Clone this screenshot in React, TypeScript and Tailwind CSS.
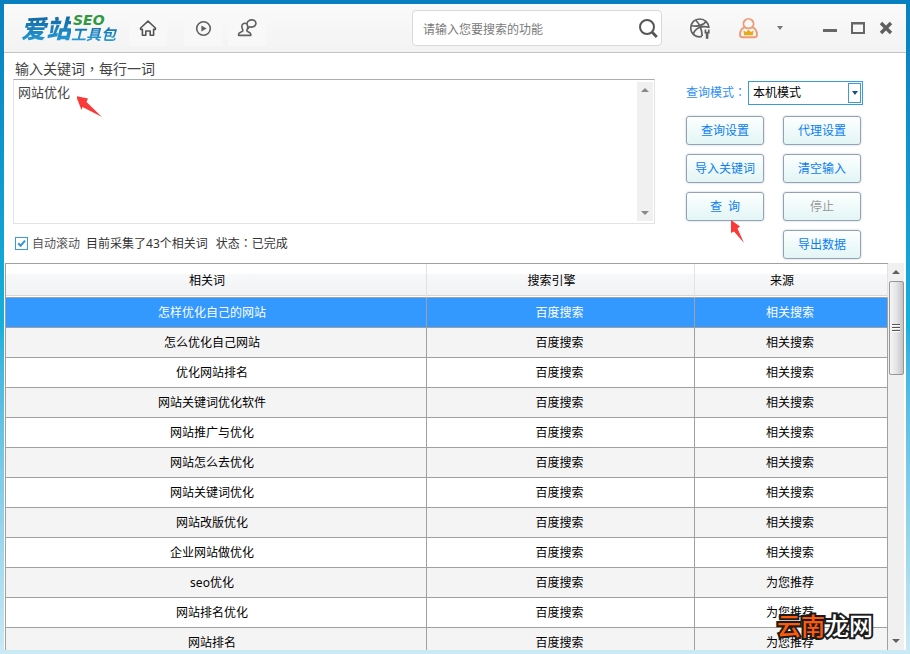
import { useState } from 'react';

const rowsData = [
  { word: '怎样优化自己的网站', engine: '百度搜索', source: '相关搜索' },
  { word: '怎么优化自己网站', engine: '百度搜索', source: '相关搜索' },
  { word: '优化网站排名', engine: '百度搜索', source: '相关搜索' },
  { word: '网站关键词优化软件', engine: '百度搜索', source: '相关搜索' },
  { word: '网站推广与优化', engine: '百度搜索', source: '相关搜索' },
  { word: '网站怎么去优化', engine: '百度搜索', source: '相关搜索' },
  { word: '网站关键词优化', engine: '百度搜索', source: '相关搜索' },
  { word: '网站改版优化', engine: '百度搜索', source: '相关搜索' },
  { word: '企业网站做优化', engine: '百度搜索', source: '相关搜索' },
  { word: 'seo优化', engine: '百度搜索', source: '为您推荐' },
  { word: '网站排名优化', engine: '百度搜索', source: '为您推荐' },
  { word: '网站排名', engine: '百度搜索', source: '为您推荐' },
];

const actions = [
  { label: '查询设置' },
  { label: '代理设置' },
  { label: '导入关键词' },
  { label: '清空输入' },
  { label: '查\u00a0\u00a0询', arrow: true },
  { label: '停止', disabled: true },
  { label: '导出数据', last: true },
];

const Logo = () => (
  <div className="flex w-24 shrink-0 items-center font-black whitespace-nowrap italic">
    <span className="shrink-0 bg-linear-to-b from-[#0c5f9e] to-[#2a9fd8] bg-clip-text text-[25px] leading-8 text-transparent">
      爱站
    </span>
    <span className="flex shrink-0 flex-col">
      <span className="pl-0.5 font-['DejaVu_Sans',sans-serif] text-sm leading-3 font-bold text-[#2f9a41]">SEO</span>
      <span className="bg-linear-to-b from-[#0c6bab] to-[#2a9fd8] bg-clip-text pr-1 text-[15px] leading-4 font-bold text-transparent">
        工具包
      </span>
    </span>
  </div>
);

// full-width punctuation centred in its box
const Mark = ({ children }: { children: string }) => (
  <span className="font-['Noto_Sans_CJK_TC',sans-serif] leading-none">{children}</span>
);

const HomeIcon = () => (
  <svg className="h-5 w-5" viewBox="0 0 20 20" fill="none" stroke="#555" strokeWidth="1.6" strokeLinejoin="round">
    <path d="M2.6 10 L10 3.2 L17.4 10 V11.4 H15.6 V17.2 H12.2 V13 H7.8 V17.2 H4.4 V11.4 H2.6 Z" />
  </svg>
);

const PlayIcon = () => (
  <svg className="h-5 w-5" viewBox="0 0 20 20" fill="none" stroke="#606060" strokeWidth="1.6">
    <circle cx="10.5" cy="10.5" r="6.8" />
    <path d="M8.4 7.6 L13.6 10.5 L8.4 13.4 Z" fill="#606060" stroke="none" />
  </svg>
);

const ChatUserIcon = () => (
  <svg className="h-5 w-5" viewBox="0 0 20 20" fill="none" stroke="#606060" strokeWidth="1.6" strokeLinejoin="round">
    <path d="M9.8 5.8 C8 4.6 4.8 5.4 4.8 8.6 C4.8 10.4 5.8 11.4 6 12.6 C5.6 14 1.8 14 1.6 16.2 V17.4 H13.8 V16.2 C13.6 14 9.9 14 9.8 12.6 C10.2 11.6 10.6 10.9 10.6 9.4" />
    <path d="M10.8 10.8 V8.2 C9.6 6.4 9.8 4 11.6 2.8 C13.6 1.4 16.8 1.6 18.2 3.2 C19.6 5 18.8 7.8 16.8 8.6 C15.2 9.3 13.6 9.2 12.6 8.8 Z" />
  </svg>
);

const SearchIcon = () => (
  <svg className="h-5 w-5" viewBox="0 0 20 20" fill="none" stroke="#555">
    <circle cx="9" cy="9" r="7" strokeWidth="2" />
    <path d="M14.2 14.2 L18.8 19" strokeWidth="2.8" />
  </svg>
);

const BallIcon = () => (
  <svg className="h-[22px] w-[22px]" viewBox="0 0 22 22" fill="none" stroke="#606060" strokeWidth="1.7">
    <path d="M13 19.4 C7 21 1.8 17 1.8 11 C1.8 5.6 5.8 2 10.8 2 C15.8 2 19.8 6 20 11" />
    <path d="M2 8.2 C7 10.4 14.6 8.6 17 4.4" />
    <path d="M6.6 3 C10.6 7 13 12.4 13.2 19" />
    <path d="M4.4 17 C6 11.4 12.5 8.4 19.6 10.2" />
    <path d="M16.4 12.6 V15.6 H19.8 V12.6" strokeWidth="1.7" />
    <path d="M18.1 15.4 V21.8" strokeWidth="2.6" />
  </svg>
);

const AvatarIcon = () => (
  <svg className="h-[22px] w-[22px]" viewBox="0 0 22 22" fill="none" stroke="#ef9a76" strokeWidth="1.9">
    <path d="M7.8 10.2 A5 5 0 1 1 15.2 10.2 C18.2 11.4 19.8 14.2 20 17.4 C20 19.4 19.2 20.2 17.6 20.2 H5.4 C3.8 20.2 3 19.4 3 17.4 C3.2 14.2 4.8 11.4 7.8 10.2 Z" />
    <path d="M7.8 10.2 C9.6 11.7 13.4 11.7 15.2 10.2" />
    <path d="M6.4 13.4 L9.2 15 L11.5 12.4 L13.8 15 L16.6 13.4 L15.8 18.2 H7.2 Z" fill="#e8ab17" stroke="none" />
  </svg>
);

const Triangle = ({ up = false, className = 'w-2 text-[#606060]' }: { up?: boolean; className?: string }) => (
  <svg className={`h-1 ${className}`} viewBox="0 0 8 4" preserveAspectRatio="none" fill="currentColor">
    <path d={up ? 'M0 4 L4 0 L8 4 Z' : 'M0 0 H8 L4 4 Z'} />
  </svg>
);

export default function App() {
  const [keywords, setKeywords] = useState('网站优化');
  const [search, setSearch] = useState('');
  const [mode, setMode] = useState('本机模式');
  const [autoScroll, setAutoScroll] = useState(true);
  const [selected, setSelected] = useState(0);

  return (
    <div className="h-screen overflow-hidden bg-linear-to-b from-[#0880c0] via-[#16b0dc] via-50% to-[#cbeaf5] p-1 font-['Noto_Sans','Noto_Sans_CJK_SC',sans-serif] text-xs text-[#333]">
      <div className="relative flex h-full flex-col overflow-hidden bg-white">
        <header className="flex h-[49px] shrink-0 items-center border-b border-[#c3c3c3] bg-linear-to-b from-[#fafafa] to-[#f3f3f3] pr-1.5 pl-[17px]">
          <Logo />
          <nav className="ml-3 flex">
            <button aria-label="首页" className="flex h-9 w-[38px] items-center justify-center bg-[#f8f8f8]">
              <HomeIcon />
            </button>
            <button aria-label="视频" className="ml-[17px] flex h-9 w-[38px] items-center justify-center bg-[#f8f8f8]">
              <PlayIcon />
            </button>
            <button aria-label="客服" className="ml-1.5 flex h-9 w-[38px] items-center justify-center bg-[#f8f8f8]">
              <ChatUserIcon />
            </button>
          </nav>
          <div className="ml-auto flex h-9 w-[250px] items-center rounded border border-[#d9d9d9] bg-white pr-[3px] pl-2.5">
            <input
              aria-label="搜索功能"
              className="h-full min-w-0 flex-1 pt-0.5 outline-none placeholder:text-[#7a7a7a]"
              placeholder="请输入您要搜索的功能"
              value={search}
              onChange={(e) => setSearch(e.target.value)}
            />
            <button aria-label="搜索">
              <SearchIcon />
            </button>
          </div>
          <button aria-label="工具" className="ml-[19px] flex h-9 w-[38px] items-center justify-center">
            <BallIcon />
          </button>
          <button aria-label="账户" className="ml-2.5 flex h-9 w-[38px] items-center justify-center">
            <AvatarIcon />
          </button>
          <button aria-label="菜单" className="ml-[5px] flex h-9 w-4 items-center justify-center">
            <Triangle className="w-1.5 text-[#777]" />
          </button>
          <div className="ml-7 flex">
            <button aria-label="最小化" className="flex h-7 w-7 items-center justify-center">
              <svg className="h-4 w-4" viewBox="0 0 16 16" fill="#666">
                <path d="M1 9 H15 V12 H1 Z" />
              </svg>
            </button>
            <button aria-label="最大化" className="flex h-7 w-7 items-center justify-center">
              <svg className="h-4 w-4" viewBox="0 0 16 16" fill="none" stroke="#666" strokeWidth="2">
                <path d="M2 3 H14 V13 H2 Z M1 3.5 H15" />
              </svg>
            </button>
            <button aria-label="关闭" className="flex h-7 w-7 items-center justify-center">
              <svg className="h-4 w-4" viewBox="0 0 16 16" fill="none" stroke="#5f5f5f" strokeWidth="3.4">
                <path d="M3 3 L13 13 M13 3 L3 13" />
              </svg>
            </button>
          </div>
        </header>

        <main className="flex min-h-0 flex-1 flex-col">
          <div className="flex shrink-0 gap-[31px] pr-[43px] pl-[9px]">
            <section className="flex flex-1 flex-col pt-1.5">
              <label htmlFor="keywords" className="h-5 pl-0.5 text-sm leading-5 text-[#444]">
                输入关键词<Mark>，</Mark>每行一词
              </label>
              <div className="relative flex h-[145px] border border-[#e1e3ea] border-t-[#abadb3]">
                <textarea
                  id="keywords"
                  className="flex-1 resize-none overflow-hidden px-1 py-0.5 text-[13px] leading-5 text-[#444] outline-none"
                  value={keywords}
                  onChange={(e) => setKeywords(e.target.value)}
                />
                <div className="my-0.5 mr-px flex w-4 flex-col items-center justify-between bg-[#f0f0f0] py-1.5">
                  <Triangle up className="w-2 text-[#888]" />
                  <Triangle className="w-2 text-[#888]" />
                </div>
                <svg className="absolute top-4 left-[63px] h-6 w-7" viewBox="0 0 28 24" fill="#f93a37">
                  <path d="M-1 0 L11 2.5 L9.5 6 L25 21 L5.5 11 L4.5 14 Z" />
                </svg>
              </div>
              <div className="flex h-[39px] items-center pl-0.5">
                <label className="flex items-center gap-1 text-[#555]">
                  <span className="relative flex">
                    <input
                      type="checkbox"
                      className="h-[13px] w-[13px] appearance-none border border-[#3a9bd9] bg-white"
                      checked={autoScroll}
                      onChange={() => setAutoScroll(!autoScroll)}
                    />
                    {autoScroll && (
                      <svg
                        className="pointer-events-none absolute inset-0 h-[13px] w-[13px]"
                        viewBox="0 0 13 13"
                        fill="none"
                        stroke="#2f93d8"
                        strokeWidth="2"
                      >
                        <path d="M3.2 6.2 L5.6 8.8 L10 3.6" />
                      </svg>
                    )}
                  </span>
                  自动滚动
                </label>
                <span className="ml-1.5">目前采集了43个相关词</span>
                <span className="ml-2">
                  状态<Mark>：</Mark>已完成
                </span>
              </div>
            </section>

            <section className="w-[177px] shrink-0 pt-7">
              <div className="flex h-6 items-center justify-between">
                <label htmlFor="mode" className="text-[#2e90f7]">
                  查询模式<Mark>：</Mark>
                </label>
                <div className="relative h-6 w-[115px]">
                  <select
                    id="mode"
                    className="h-full w-full appearance-none border border-[#3a9bd9] bg-white pl-1 text-black outline-none"
                    value={mode}
                    onChange={(e) => setMode(e.target.value)}
                  >
                    <option>本机模式</option>
                    <option>代理模式</option>
                  </select>
                  <span className="pointer-events-none absolute inset-y-0.5 right-0.5 flex w-[13px] items-center justify-center border border-[#3a9bd9]">
                    <Triangle className="w-1.5 text-[#1b4f80]" />
                  </span>
                </div>
              </div>
              <div className="mt-[11px] grid grid-cols-[78px_78px] gap-x-[19px] gap-y-[9px]">
                {actions.map((action) => (
                  <div key={action.label} className={action.last ? 'relative col-start-2' : 'relative'}>
                    <button
                      disabled={action.disabled}
                      className="h-[29px] w-full rounded-[3px] border border-[#93a3b5] bg-linear-to-b from-[#fdffff] to-[#e3f5f5] text-[#0a7df5] shadow-[0_0_2px_#b5bec8] disabled:text-[#9a9a9a]"
                    >
                      {action.label}
                    </button>
                    {action.arrow && (
                      <svg className="absolute top-7 left-11 h-6 w-4" viewBox="0 0 16 24" fill="#f93a37">
                        <path d="M1 0 L10 6.5 L7.5 8.5 L14 23 L4 11.5 L1 13 Z" />
                      </svg>
                    )}
                  </div>
                ))}
              </div>
            </section>
          </div>

          <div className="flex min-h-0 flex-1 pr-0.5 pl-px">
            <div className="flex-1 overflow-hidden border-t border-l border-[#a0a0a0]">
              <table className="w-full table-fixed border-separate border-spacing-0 text-center text-black">
                <colgroup>
                  <col />
                  <col className="w-[268px]" />
                  <col className="w-[193px]" />
                </colgroup>
                <thead>
                  <tr className="h-[34px]">
                    {['相关词', '搜索引擎', '来源'].map((title) => (
                      <th
                        key={title}
                        className="border-r border-b border-r-[#e2e2e2] border-b-[#a0a0a0] bg-linear-to-b from-white from-30% via-[#f7f8fa] via-31% to-[#f1f2f4] p-0 pr-[18px] font-normal shadow-[inset_0_-1px_#fff,inset_0_-2px_#d5d5d5]"
                      >
                        {title}
                      </th>
                    ))}
                  </tr>
                </thead>
                <tbody>
                  {rowsData.map((row, index) => (
                    <tr
                      key={row.word}
                      onClick={() => setSelected(index)}
                      className={`h-[30px] ${
                        selected === index ? 'bg-[#3399ff] text-white' : index % 2 ? 'bg-[#f4f4f4]' : 'bg-white'
                      }`}
                    >
                      <td className="border-r border-b border-[#a0a0a0] p-0 pr-2">{row.word}</td>
                      <td className="border-r border-b border-[#a0a0a0] p-0 pr-0.5">{row.engine}</td>
                      <td className="border-r border-b border-[#a0a0a0] p-0 pr-0.5">{row.source}</td>
                    </tr>
                  ))}
                </tbody>
              </table>
            </div>
            <div className="flex w-4 shrink-0 flex-col items-center bg-[#f0f0f0]">
              <div className="flex h-[18px] items-center">
                <Triangle up />
              </div>
              <div className="flex h-[94px] w-[15px] flex-col items-center justify-center gap-px rounded-xs border border-[#979797] bg-linear-to-r from-[#f5f5f5] via-[#e4e4e6] to-[#c4c4c8]">
                <span className="h-0.5 w-2 border-t border-[#555] bg-white"></span>
                <span className="h-0.5 w-2 border-t border-[#555] bg-white"></span>
                <span className="h-0.5 w-2 border-t border-[#555] bg-white"></span>
              </div>
              <div className="mt-auto flex h-[18px] items-center">
                <Triangle />
              </div>
            </div>
          </div>
        </main>

        <p className="pointer-events-none absolute right-[33px] bottom-2 text-2xl font-medium text-white [-webkit-text-stroke:4px_#1c1c1c] [paint-order:stroke_fill]">
          <span className="text-[#ff5a0a]">云南</span>龙网
        </p>
      </div>
    </div>
  );
}
